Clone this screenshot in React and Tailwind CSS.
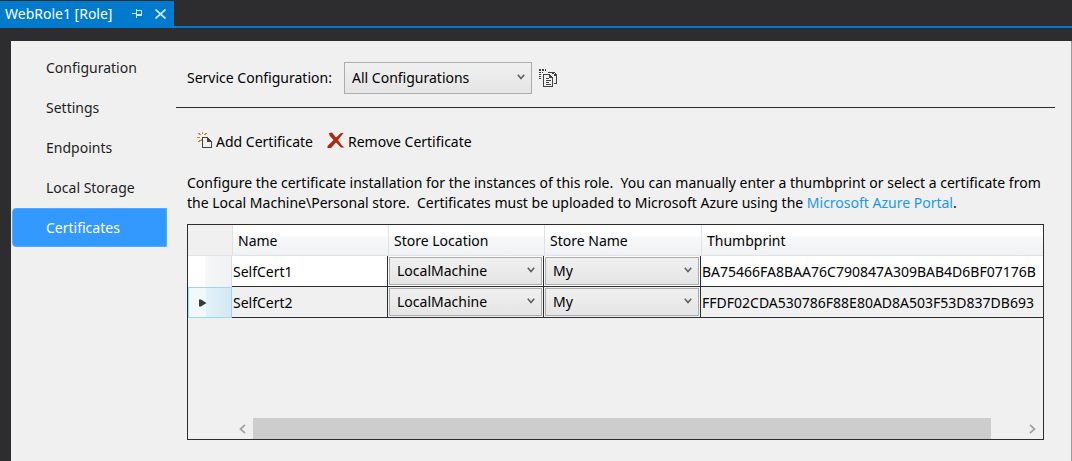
const navItems = ['Configuration', 'Settings', 'Endpoints', 'Local Storage', 'Certificates'];

const certificates = [
  { name: 'SelfCert1', location: 'LocalMachine', store: 'My', thumbprint: 'BA75466FA8BAA76C790847A309BAB4D6BF07176B' },
  { name: 'SelfCert2', location: 'LocalMachine', store: 'My', thumbprint: 'FFDF02CDA530786F88E80AD8A503F53D837DB693' },
];

function PinIcon() {
  return (
    <svg width="11" height="9" viewBox="0 0 11 9" fill="#d0e6f5" shapeRendering="crispEdges">
      <path d="M0 4h4v1H0zM4 0h1v9H4zM5 1h5v1H5zM9 2h1v3H9zM5 5h5v2H5z" />
    </svg>
  );
}

function CloseIcon() {
  return (
    <svg width="11" height="10" viewBox="0 0 11 10" fill="none" stroke="#d0e6f5" strokeWidth="1.7">
      <path d="M0.5 0.5l10 9M10.5 0.5l-10 9" />
    </svg>
  );
}

function CopyIcon() {
  return (
    <svg width="20" height="19" viewBox="0 0 20 19" shapeRendering="crispEdges">
      <path
        fill="#424242"
        d="M0 0h2v2H0zM3 0h2v2H3zM6 0h1v2H6zM0 3h2v1H0zM0 5h2v1H0zM0 7h2v1H0zM0 9h2v1H0zM3 3h1v1H3zM9 3h7v1H9zM16 4h1v1h-1zM17 5h1v10h-3v-1h2V7h-2V4H9z"
      />
      <path fill="#f0f0f0" d="M4 5h7l3 3v10H4z" />
      <path fill="#424242" fillRule="evenodd" d="M4 5h7v1h1v1h1v1h1v10H4zM5 6v11h8V9h-3V6z" />
      <path fill="#424242" d="M7 9h3v1H7zM7 11h5v1H7zM7 13h3v1H7zM7 15h5v1H7z" />
    </svg>
  );
}

function AddIcon() {
  return (
    <svg className="self-start" width="16" height="17" viewBox="0 0 16 17" shapeRendering="crispEdges">
      <path
        fill="#c8862f"
        d="M5 0h1v2H5zM8 1h2v1H8zM7 2h2v1H7zM1 1h2v1H1zM2 2h2v1H2zM0 5h3v1H0zM2 8h2v1H2zM1 9h2v1H1zM4 7h1v2H4z"
      />
      <path fill="#424242" fillRule="evenodd" d="M5 5h6v1h1v1h1v1h1v1h1v7H5zM6 6v9h8v-5h-4V6z" />
    </svg>
  );
}

function RemoveIcon() {
  return (
    <svg className="self-start" width="18" height="17" viewBox="0 0 18 17" fill="#a82a12">
      <path d="M2 1L5 0.5L9 5.5L14 1L16.5 1L11 8L15 13.500L17.500 15.500L14 15.500L9 10.500L4 16L0.500 16L0.500 14L6.500 8L2.500 3.500Z" />
    </svg>
  );
}

function Chevron({ className }) {
  return (
    <svg className={className} width="8" height="6" viewBox="0 0 8 6" fill="none" stroke="#606060" strokeWidth="1.6">
      <path d="M0.800 0.800L4 4.500L7.200 0.800" />
    </svg>
  );
}

function Dropdown({ id, label, value, size = 'small' }) {
  const large = size === 'large';
  return (
    <div className="relative">
      <select
        id={id}
        aria-label={label}
        defaultValue={value}
        className={
          large
            ? 'block h-8 w-[188px] appearance-none border border-[#acacac] bg-linear-to-b from-[#f0f0f0] to-[#e5e5e5] pl-[7px] pr-6'
            : 'block h-7 w-full appearance-none border border-[#acacac] bg-linear-to-b from-[#f0f0f0] to-[#e5e5e5] pl-[7px] pr-6'
        }
      >
        <option>{value}</option>
      </select>
      <Chevron
        className={
          large
            ? 'pointer-events-none absolute right-[7px] top-3'
            : 'pointer-events-none absolute right-[7px] top-[10px]'
        }
      />
    </div>
  );
}

function Sidebar() {
  return (
    <nav className="w-[156px] shrink-0 pt-[7px]">
      {navItems.map((item) => (
        <a
          key={item}
          href="#"
          aria-current={item === 'Certificates' ? 'page' : undefined}
          className={
            item === 'Certificates'
              ? 'ml-px flex h-[39px] items-center rounded-l border border-[#55aaff] bg-[#3399ff] pl-[33px] pt-px text-white'
              : 'flex h-10 items-center pl-[35px] text-[#1e1e1e]'
          }
        >
          {item}
        </a>
      ))}
    </nav>
  );
}

function CertificateTable() {
  const head =
    'border-l border-b border-[#e0e3e6] bg-linear-to-b from-white from-35% via-[#f7f8fa] via-40% to-[#f0f2f4] p-0 pt-[2px] pl-[5px] text-left font-normal';
  return (
    <div className="ml-[11px] mr-[11px] mt-[11px] flex h-[216px] flex-col overflow-hidden border border-[#2d2d30]">
      <table className="w-full table-fixed border-separate border-spacing-0">
        <thead>
          <tr className="h-[31px]">
            <th className="w-11 border-b border-[#e0e3e6]" aria-label="Row" />
            <th className={`${head} w-[156px]`}>Name</th>
            <th className={`${head} w-[156px]`}>Store Location</th>
            <th className={`${head} w-[157px]`}>Store Name</th>
            <th className={head}>Thumbprint</th>
          </tr>
        </thead>
        <tbody>
          {certificates.map((cert, i) => (
            <tr key={cert.name} className={i === 0 ? 'h-[31px] bg-white' : 'h-[31px] bg-[#f0f0f0]'}>
              <td
                className={
                  i === 0
                    ? 'border-r border-[#dcdfe2] bg-linear-to-r from-white from-40% via-[#f6f7f9] via-41% to-[#eff1f3] p-0'
                    : 'border border-[#99d8f5] bg-linear-to-r from-[#f1f9fd] from-40% via-[#e2f1f9] via-41% to-[#d5e9f4] p-0'
                }
              >
                {i === 1 && (
                  <svg className="ml-[10px]" width="8" height="8" viewBox="0 0 8 8" fill="#3a3a3a">
                    <path d="M0 0.500h2l5.500 3.500L2 7.500H0z" />
                  </svg>
                )}
              </td>
              <td className="border-r border-b border-[#2d2d30] p-0 pt-px pl-px">{cert.name}</td>
              <td className="border-r border-b border-[#2d2d30] p-px">
                <Dropdown label={`Store location of ${cert.name}`} value={cert.location} />
              </td>
              <td className="border-r border-b border-[#2d2d30] p-px">
                <Dropdown label={`Store name of ${cert.name}`} value={cert.store} />
              </td>
              <td className="overflow-hidden whitespace-nowrap border-b border-[#2d2d30] p-0 pt-px pl-px">
                {cert.thumbprint}
              </td>
            </tr>
          ))}
        </tbody>
      </table>
      <div className="ml-11 mt-auto flex h-[21px] items-stretch">
        <button aria-label="Scroll left" className="flex w-[21px] items-center justify-center">
          <svg width="7" height="10" viewBox="0 0 7 10" fill="none" stroke="#a3a3a3" strokeWidth="1.8">
            <path d="M6 0.800L1.500 5L6 9.200" />
          </svg>
        </button>
        <div className="flex-1">
          <div className="h-full w-[96%] bg-[#cdcdcd]" />
        </div>
        <button aria-label="Scroll right" className="flex w-[21px] items-center justify-center">
          <svg width="7" height="10" viewBox="0 0 7 10" fill="none" stroke="#a3a3a3" strokeWidth="1.8">
            <path d="M1 0.800L5.500 5L1 9.200" />
          </svg>
        </button>
      </div>
    </div>
  );
}

export default function App() {
  return (
    <div className="flex min-h-screen flex-col bg-[#2d2d30] pt-px font-['Noto_Sans',sans-serif] text-[14px] leading-5 text-black">
      <header className="flex border-b-2 border-[#007acc]">
        <div className="flex h-[25px] w-[174px] items-center bg-[#007acc] pl-[5px] text-white">
          <span className="flex-1 whitespace-nowrap">WebRole1 [Role]</span>
          <button aria-label="Pin tab" className="mr-3">
            <PinIcon />
          </button>
          <button aria-label="Close tab" className="mr-2">
            <CloseIcon />
          </button>
        </div>
      </header>

      <div className="mt-[13px] ml-[11px] flex flex-1 border-r border-[#999999] bg-[#f0f0f0]">
        <Sidebar />
        <main className="ml-[9px] mr-4 min-w-0 flex-1">
          <div className="flex items-center border-b border-[#2d2d30] pt-[21px] pb-[13px] pl-[11px]">
            <label htmlFor="service-configuration" className="w-[157px] whitespace-nowrap">
              Service Configuration:
            </label>
            <Dropdown id="service-configuration" value="All Configurations" size="large" />
            <button aria-label="Manage configurations" className="ml-[7px]">
              <CopyIcon />
            </button>
          </div>

          <div className="flex h-5 items-center mt-6 pl-[21px]">
            <button className="flex w-[130px] items-center gap-[3px] whitespace-nowrap">
              <AddIcon />
              Add Certificate
            </button>
            <button className="flex items-center gap-[3px] whitespace-nowrap">
              <RemoveIcon />
              Remove Certificate
            </button>
          </div>

          <p className="mt-[21px] ml-[11px] whitespace-nowrap">
            Configure the certificate installation for the instances of this role.&nbsp; You can manually enter a
            thumbprint or select a certificate from
            <br />
            the Local Machine\Personal store.&nbsp; Certificates must be uploaded to Microsoft Azure using the{' '}
            <a href="#" className="text-[#1a98f0]">
              Microsoft Azure Portal
            </a>
            .
          </p>

          <CertificateTable />
        </main>
      </div>
    </div>
  );
}
